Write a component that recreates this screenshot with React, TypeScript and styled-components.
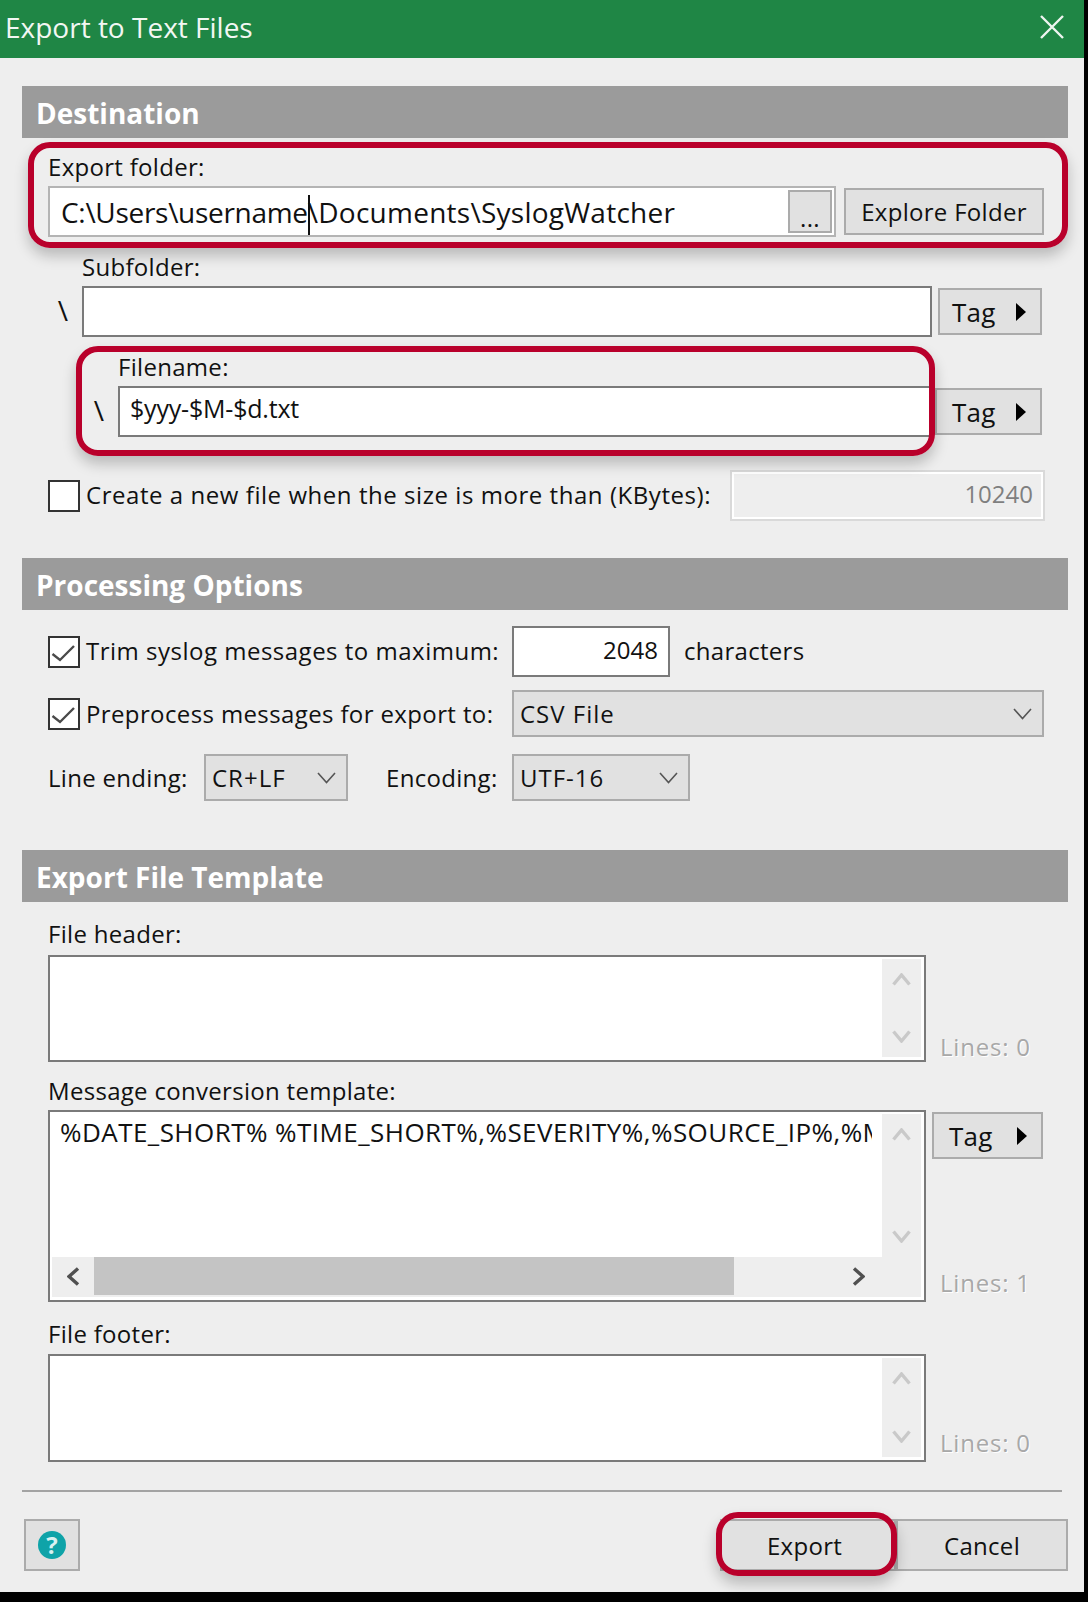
import React from "react";
import styled, { createGlobalStyle } from "styled-components";

const GlobalStyle = createGlobalStyle`
  html, body {
    margin: 0;
    padding: 0;
    background: #000;
  }
  body {
    font-family: "Open Sans", "Liberation Sans", sans-serif;
    color: #111;
  }
`;

const ChevronDown = ({ color = "#555", stroke = 1.6 }: { color?: string; stroke?: number }) => (
  <svg width="19" height="12" viewBox="0 0 19 12" fill="none">
    <polyline points="1,1 9.5,10.5 18,1" stroke={color} strokeWidth={stroke} />
  </svg>
);

const ChevronUp = () => (
  <svg width="19" height="13" viewBox="0 0 19 13" fill="none">
    <polyline points="1.5,11.5 9.5,2 17.5,11.5" stroke="#c9c9c9" strokeWidth="3.4" />
  </svg>
);

const ChevronDownThick = () => (
  <svg width="19" height="13" viewBox="0 0 19 13" fill="none">
    <polyline points="1.5,1.5 9.5,11 17.5,1.5" stroke="#c9c9c9" strokeWidth="3.4" />
  </svg>
);

const ChevronSide = ({ right }: { right?: boolean }) => (
  <svg width="13" height="19" viewBox="0 0 13 19" fill="none">
    <polyline
      points={right ? "2,1.5 11,9.5 2,17.5" : "11,1.5 2,9.5 11,17.5"}
      stroke="#505050"
      strokeWidth="3.4"
    />
  </svg>
);

const Dialog = styled.div`
  width: 1084px;
  height: 1592px;
  background: #eeeeee;
  overflow: hidden;
`;

const TitleBar = styled.div`
  box-sizing: border-box;
  height: 58px;
  background: #1f8645;
  color: #f2f7f3;
  display: flex;
  justify-content: space-between;
  align-items: center;
  padding: 0 20px 4px 5px;
  font-size: 28px;
`;

const Section = styled.section<{ $top: number }>`
  margin: ${(p) => p.$top}px 16px 0 22px;
`;

const SectionBar = styled.div`
  height: 52px;
  background: #9b9b9b;
  color: #fff;
  font-size: 28px;
  font-weight: 700;
  line-height: 54px;
  padding-left: 14px;
`;

const Group = styled.div`
  position: relative;
  margin-left: 26px;
`;

const FieldLabel = styled.div<{ $top: number; $left?: number }>`
  height: 30px;
  line-height: 30px;
  margin-top: ${(p) => p.$top}px;
  margin-left: ${(p) => p.$left ?? 0}px;
  font-size: 24px;
  letter-spacing: 0.3px;
`;

const Row = styled.div<{ $top: number; $height: number }>`
  display: flex;
  align-items: center;
  height: ${(p) => p.$height}px;
  margin-top: ${(p) => p.$top}px;
  margin-left: 26px;
`;

const InnerRow = styled.div`
  display: flex;
  align-items: center;
  height: 51px;
  margin-top: 4px;
`;

const Slash = styled.div<{ $width: number }>`
  width: ${(p) => p.$width}px;
  padding: 0 14px 4px 0;
  box-sizing: border-box;
  text-align: right;
  font-size: 28px;
`;

const Input = styled.div<{ $width: number; $light?: boolean; $right?: boolean; $pad?: number; $size?: number }>`
  box-sizing: border-box;
  width: ${(p) => p.$width}px;
  height: 51px;
  flex: none;
  display: flex;
  align-items: center;
  justify-content: ${(p) => (p.$right ? "flex-end" : "flex-start")};
  padding: 0 ${(p) => p.$pad ?? 10}px;
  background: #fff;
  border: 2px solid ${(p) => (p.$light ? "#b4b4b4" : "#7a7a7a")};
  font-size: ${(p) => p.$size ?? 24}px;
  white-space: nowrap;
`;

const NumberInput = styled(Input)`
  padding-bottom: 4px;
`;

const FilenameInput = styled(Input)`
  padding-bottom: 7px;
  letter-spacing: -0.2px;
`;

const FolderInput = styled(Input)`
  padding: 0 2px 0 11px;
  justify-content: space-between;
  font-size: 28px;
`;

const FolderText = styled.span`
  padding-top: 5px;
`;

const FolderHead = styled.span`
  letter-spacing: -0.3px;
`;

const FolderTail = styled.span`
  letter-spacing: 0.25px;
`;

const Caret = styled.span`
  display: inline-block;
  width: 0;
  height: 40px;
  border-left: 2px solid #111;
  vertical-align: middle;
  margin: 0 -2px 0 0;
`;

const Button = styled.div<{ $width: number; $height?: number; $left?: number }>`
  box-sizing: border-box;
  width: ${(p) => p.$width}px;
  height: ${(p) => p.$height ?? 47}px;
  margin-left: ${(p) => p.$left ?? 0}px;
  flex: none;
  display: flex;
  align-items: center;
  justify-content: center;
  background: #e1e1e1;
  border: 2px solid #ababab;
  font-size: 24px;
  letter-spacing: 0.3px;
`;

const BrowseButton = styled(Button)`
  align-items: flex-end;
  line-height: 26px;
`;

const ExportButton = styled(Button)`
  padding-right: 7px;
`;

const TagButton = styled(Button)<{ $pad?: number }>`
  justify-content: space-between;
  padding: 0 14px 0 ${(p) => p.$pad ?? 12}px;
  font-size: 26px;
`;

const TagArrow = styled.span`
  width: 0;
  height: 0;
  border-left: 10px solid #000;
  border-top: 9px solid transparent;
  border-bottom: 9px solid transparent;
`;

const Select = styled(Button)`
  justify-content: space-between;
  padding: 0 10px 0 6px;
  letter-spacing: 1px;
`;

const DisabledInput = styled.div`
  box-sizing: border-box;
  width: 315px;
  height: 51px;
  margin-left: 16px;
  flex: none;
  display: flex;
  align-items: center;
  justify-content: flex-end;
  padding: 0 10px 4px 0;
  background: #eeeeee;
  border: 2px solid #d9d9d9;
  box-shadow: inset 0 0 0 2px #fff;
  color: #7f7f7f;
  font-size: 24px;
`;

const Checkbox = styled.div`
  box-sizing: border-box;
  width: 32px;
  height: 32px;
  flex: none;
  background: #fff;
  border: 2px solid #333;
  svg {
    display: block;
  }
`;

const CheckLabel = styled.div<{ $width?: number; $lift?: number; $spacing?: number }>`
  margin-left: 6px;
  padding-bottom: ${(p) => p.$lift ?? 0}px;
  font-size: 24px;
  letter-spacing: ${(p) => p.$spacing ?? 0.5}px;
  white-space: nowrap;
  flex: none;
  width: ${(p) => (p.$width ? `${p.$width}px` : "auto")};
`;

const PlainLabel = styled.div<{ $width: number; $left?: number; $lift?: number }>`
  width: ${(p) => p.$width}px;
  margin-left: ${(p) => p.$left ?? 0}px;
  padding-bottom: ${(p) => p.$lift ?? 0}px;
  flex: none;
  font-size: 24px;
  letter-spacing: 0.3px;
  white-space: nowrap;
`;

const Frame = styled.div<{ $top: number; $left: number; $right: number; $bottom: number }>`
  position: absolute;
  top: ${(p) => p.$top}px;
  left: ${(p) => p.$left}px;
  right: ${(p) => p.$right}px;
  bottom: ${(p) => p.$bottom}px;
  border: 6px solid #b9002b;
  border-radius: 22px;
  box-shadow: 0 8px 14px rgba(0, 0, 0, 0.22);
  pointer-events: none;
`;

const TemplateRow = styled.div<{ $height: number; $top: number }>`
  display: flex;
  height: ${(p) => p.$height}px;
  margin-top: ${(p) => p.$top}px;
`;

const TextArea = styled.div`
  box-sizing: border-box;
  width: 878px;
  flex: none;
  display: flex;
  flex-direction: column;
  background: #fff;
  border: 2px solid #7a7a7a;
  padding: 2px 3px 3px 2px;
`;

const TextAreaTop = styled.div`
  flex: 1;
  display: flex;
  min-height: 0;
`;

const TextContent = styled.div`
  flex: 1;
  overflow: hidden;
  margin: 0 10px 0 8px;
  font-size: 26px;
  letter-spacing: 0.45px;
  white-space: nowrap;
  min-width: 0;
`;

const VScroll = styled.div`
  width: 39px;
  flex: none;
  display: flex;
  flex-direction: column;
  justify-content: space-between;
  align-items: center;
  background: #eeeeee;
  padding: 14px 0 14px;
  box-sizing: border-box;
`;

const HScroll = styled.div`
  height: 40px;
  flex: none;
  display: flex;
  align-items: flex-start;
  background: #eeeeee;
  padding-right: 53px;
`;

const HArrow = styled.div<{ $width: number }>`
  width: ${(p) => p.$width}px;
  height: 38px;
  flex: none;
  display: flex;
  align-items: center;
  justify-content: center;
`;

const HThumb = styled.div`
  width: 640px;
  height: 38px;
  background: #c4c4c4;
  flex: none;
`;

const SideColumn = styled.div`
  flex: 1;
  display: flex;
  flex-direction: column;
  justify-content: space-between;
  padding: 2px 0 0 6px;
`;

const LinesText = styled.div<{ $lift: number }>`
  margin: auto 0 ${(p) => p.$lift}px 8px;
  color: #a8a8a8;
  font-size: 24px;
  letter-spacing: 0.8px;
  text-shadow: 1px 1px 0 #fff;
`;

const Divider = styled.div`
  height: 2px;
  margin: 28px 22px 0 22px;
  background: #a3a3a3;
`;

const Footer = styled.div`
  display: flex;
  align-items: center;
  margin: 27px 16px 0 24px;
  height: 52px;
`;

const HelpIcon = styled.span`
  width: 28px;
  height: 28px;
  border-radius: 50%;
  background: #0fa3a8;
  color: #d9f1f1;
  font-size: 24px;
  font-weight: 700;
  line-height: 28px;
  text-align: center;
`;

const Spacer = styled.div`
  flex: 1;
`;

const ExportWrap = styled.div`
  position: relative;
`;

const Tick = () => (
  <svg width="28" height="28" viewBox="0 0 28 28" fill="none">
    <polyline points="2.5,16 10,22 24,8" stroke="#4a4a4a" strokeWidth="2.4" />
  </svg>
);

export default function App() {
  return (
    <Dialog>
      <GlobalStyle />
      <TitleBar>
        <span>Export to Text Files</span>
        <svg width="24" height="24" viewBox="0 0 24 24" fill="none">
          <path d="M1 1 L23 23 M23 1 L1 23" stroke="#eef5f0" strokeWidth="2.4" />
        </svg>
      </TitleBar>

      <Section $top={28}>
        <SectionBar>Destination</SectionBar>
        <Group>
          <FieldLabel $top={14}>Export folder:</FieldLabel>
          <InnerRow>
            <FolderInput $width={788} $light>
              <FolderText>
                <FolderHead>C:\Users\username</FolderHead>
                <Caret />
                <FolderTail>\Documents\SyslogWatcher</FolderTail>
              </FolderText>
              <BrowseButton $width={44} $height={43}>...</BrowseButton>
            </FolderInput>
            <Button $width={200} $left={8}>Explore Folder</Button>
          </InnerRow>
          <Frame $top={-10} $left={-20} $right={0} $bottom={-11} />
        </Group>
        <Group>
          <FieldLabel $top={15} $left={34}>Subfolder:</FieldLabel>
          <InnerRow>
            <Slash $width={34}>\</Slash>
            <Input $width={850} />
            <TagButton $width={104} $left={6}>Tag<TagArrow /></TagButton>
          </InnerRow>
        </Group>
        <Group>
          <FieldLabel $top={15} $left={70}>Filename:</FieldLabel>
          <InnerRow>
            <Slash $width={70}>\</Slash>
            <FilenameInput $width={814} $size={25}>$yyy-$M-$d.txt</FilenameInput>
            <TagButton $width={107} $left={3} $pad={15}>Tag<TagArrow /></TagButton>
          </InnerRow>
          <Frame $top={-6} $left={28} $right={133} $bottom={-19} />
        </Group>
        <Row $top={33} $height={51}>
          <Checkbox />
          <CheckLabel $width={628} $lift={3} $spacing={0.55}>Create a new file when the size is more than (KBytes):</CheckLabel>
          <DisabledInput>10240</DisabledInput>
        </Row>
      </Section>

      <Section $top={37}>
        <SectionBar>Processing Options</SectionBar>
        <Row $top={16} $height={51}>
          <Checkbox><Tick /></Checkbox>
          <CheckLabel $width={426} $lift={2}>Trim syslog messages to maximum:</CheckLabel>
          <NumberInput $width={158} $right>2048</NumberInput>
          <PlainLabel $width={200} $left={14} $lift={2}>characters</PlainLabel>
        </Row>
        <Row $top={13} $height={47}>
          <Checkbox><Tick /></Checkbox>
          <CheckLabel $width={426} $spacing={0.38}>Preprocess messages for export to:</CheckLabel>
          <Select $width={532}>CSV File<ChevronDown /></Select>
        </Row>
        <Row $top={17} $height={47}>
          <PlainLabel $width={156}>Line ending:</PlainLabel>
          <Select $width={144}>CR+LF<ChevronDown /></Select>
          <PlainLabel $width={126} $left={38}>Encoding:</PlainLabel>
          <Select $width={178}>UTF-16<ChevronDown /></Select>
        </Row>
      </Section>

      <Section $top={49}>
        <SectionBar>Export File Template</SectionBar>
        <Group>
          <FieldLabel $top={17}>File header:</FieldLabel>
          <TemplateRow $height={107} $top={6}>
            <TextArea>
              <TextAreaTop>
                <TextContent />
                <VScroll>
                  <ChevronUp />
                  <ChevronDownThick />
                </VScroll>
              </TextAreaTop>
            </TextArea>
            <SideColumn>
              <LinesText $lift={-1}>Lines: 0</LinesText>
            </SideColumn>
          </TemplateRow>
          <FieldLabel $top={14}>Message conversion template:</FieldLabel>
          <TemplateRow $height={192} $top={4}>
            <TextArea>
              <TextAreaTop>
                <TextContent>%DATE_SHORT% %TIME_SHORT%,%SEVERITY%,%SOURCE_IP%,%MESSAGE%</TextContent>
                <VScroll>
                  <ChevronUp />
                  <ChevronDownThick />
                </VScroll>
              </TextAreaTop>
              <HScroll>
                <HArrow $width={42}><ChevronSide /></HArrow>
                <HThumb />
                <Spacer />
                <HArrow $width={20}><ChevronSide right /></HArrow>
              </HScroll>
            </TextArea>
            <SideColumn>
              <TagButton $width={111} $pad={15}>Tag<TagArrow /></TagButton>
              <LinesText $lift={3}>Lines: 1</LinesText>
            </SideColumn>
          </TemplateRow>
          <FieldLabel $top={17}>File footer:</FieldLabel>
          <TemplateRow $height={108} $top={5}>
            <TextArea>
              <TextAreaTop>
                <TextContent />
                <VScroll>
                  <ChevronUp />
                  <ChevronDownThick />
                </VScroll>
              </TextAreaTop>
            </TextArea>
            <SideColumn>
              <LinesText $lift={3}>Lines: 0</LinesText>
            </SideColumn>
          </TemplateRow>
        </Group>
      </Section>

      <Divider />
      <Footer>
        <Button $width={56} $height={52}><HelpIcon>?</HelpIcon></Button>
        <Spacer />
        <ExportWrap>
          <ExportButton $width={176} $height={52}>Export</ExportButton>
          <Frame $top={-7} $left={-4} $right={-1} $bottom={-5} />
        </ExportWrap>
        <Button $width={172} $height={52}>Cancel</Button>
      </Footer>
    </Dialog>
  );
}
